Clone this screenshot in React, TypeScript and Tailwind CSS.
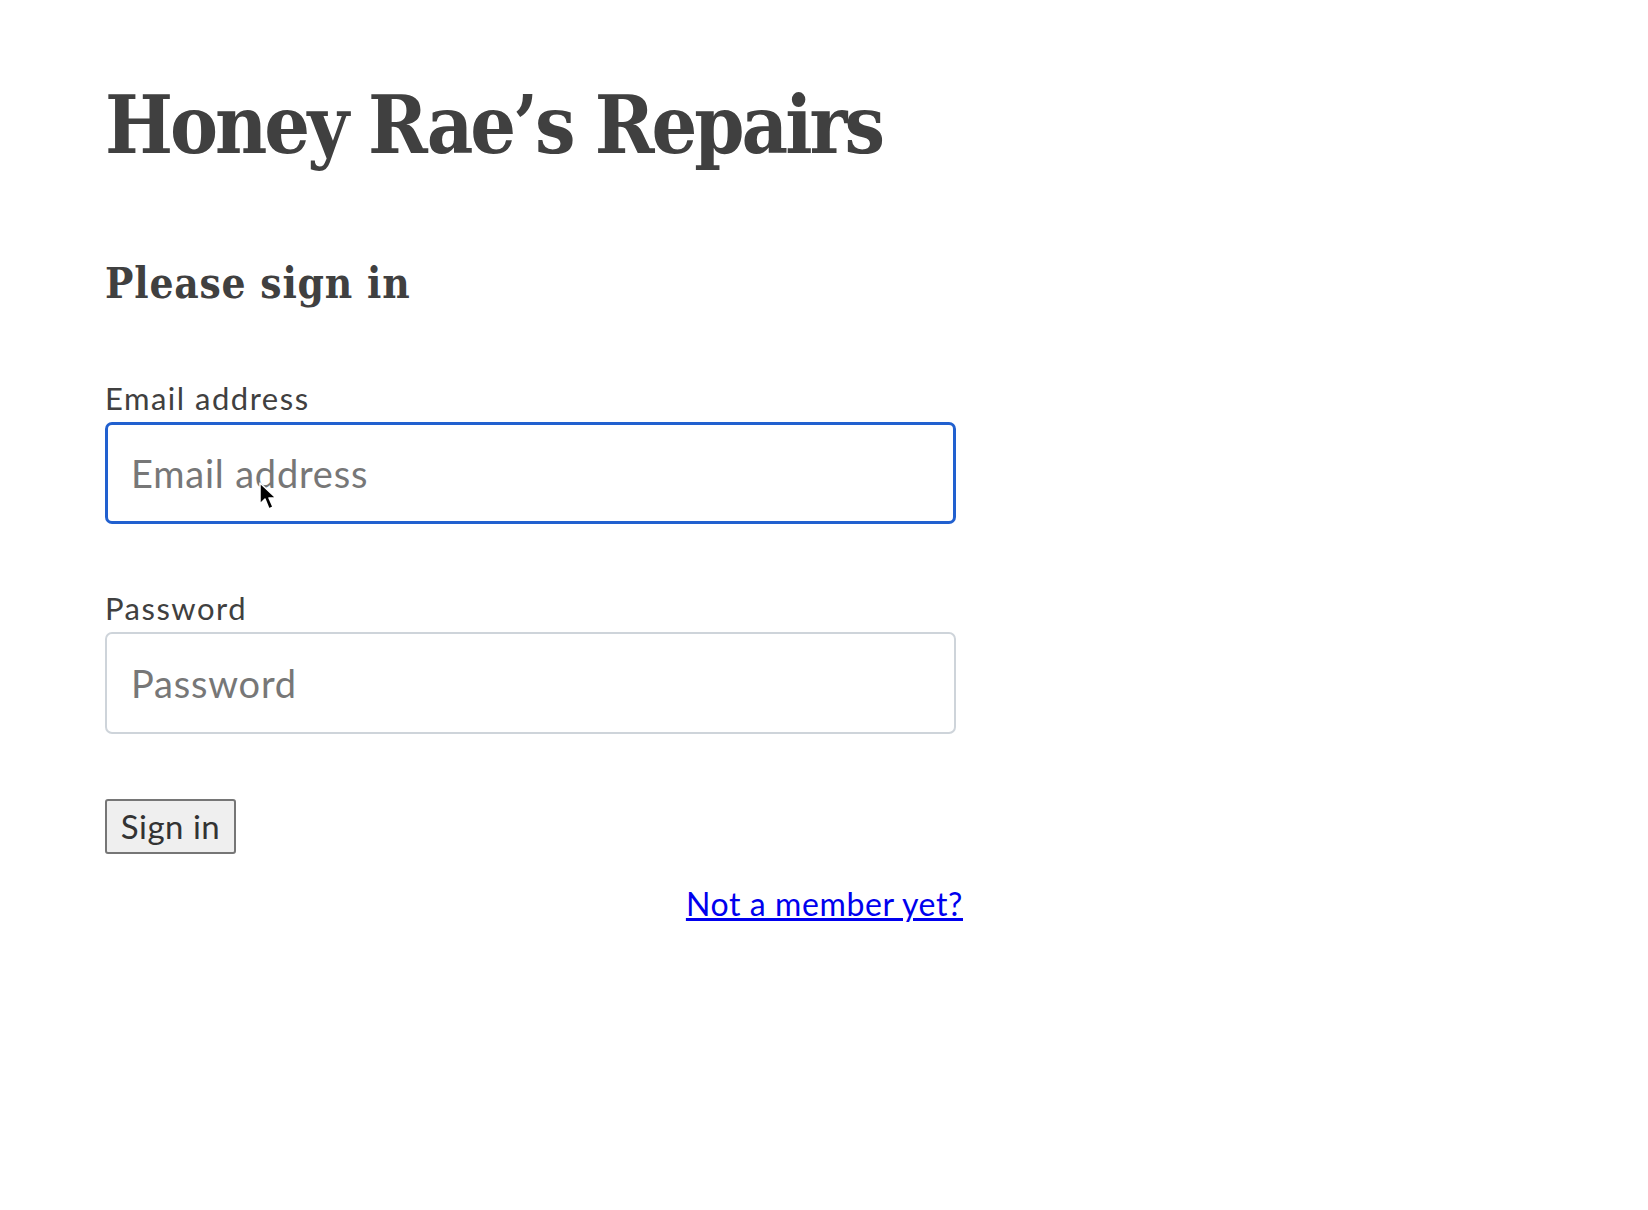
import React from "react";

const HEAD = { fontFamily: '"DejaVu Serif Condensed", "DejaVu Serif", serif' };
const BODY = { fontFamily: 'Lato, "Noto Sans", sans-serif' };

function Cursor() {
  return (
    <svg className="absolute left-[259px] top-[482px]" width="20" height="30" viewBox="0 0 20 30">
      <path d="M1 1 L1 22 L6 17 L10 27 L14 25 L10 16 L17 16 Z" fill="#000" stroke="#fff" strokeWidth="1.5" strokeLinejoin="round" />
    </svg>
  );
}

export default function App() {
  return (
    <div className="relative min-h-[1210px] bg-white text-[#404040]" style={BODY}>
      <div className="px-[105px] pt-[85px]">
        <h1 className="text-[80px] font-bold leading-none tracking-[-3px] text-[#404040]" style={HEAD}>
          Honey Rae’s Repairs
        </h1>

        <h2 className="mt-[98px] text-[42px] font-bold leading-none tracking-[0.8px] text-[#404040]" style={HEAD}>
          Please sign in
        </h2>

        <form className="mt-[75px] w-[851px]" onSubmit={e => e.preventDefault()}>
          <label className="block text-[31px] leading-[36px] tracking-[1.5px] text-[#404040]">Email address</label>
          <input
            type="email"
            placeholder="Email address"
            className="mt-[6px] block h-[102px] w-full rounded-[7px] border-[3px] border-[#2160cf] px-[23px] text-[38px] tracking-[0.8px] text-[#404040] outline-none placeholder:text-[#777]"
          />

          <label className="mt-[66px] block text-[31px] leading-[36px] tracking-[1.5px] text-[#404040]">Password</label>
          <input
            type="password"
            placeholder="Password"
            className="mt-[6px] block h-[102px] w-full rounded-[7px] border-2 border-[#ced4da] px-[24px] text-[38px] tracking-[0.8px] text-[#404040] outline-none placeholder:text-[#777]"
          />

          <button
            type="submit"
            className="mt-[65px] block h-[55px] w-[131px] rounded-[3px] border-2 border-[#767676] bg-[#efefef] text-[33px] leading-none tracking-[0.5px] text-[#333]"
          >
            Sign in
          </button>
        </form>

        <div className="mt-[26px] w-[858px] text-right">
          <a href="#" className="text-[32px] tracking-[0.6px] text-[#0000ee] underline">
            Not a member yet?
          </a>
        </div>
      </div>
      <Cursor />
    </div>
  );
}
